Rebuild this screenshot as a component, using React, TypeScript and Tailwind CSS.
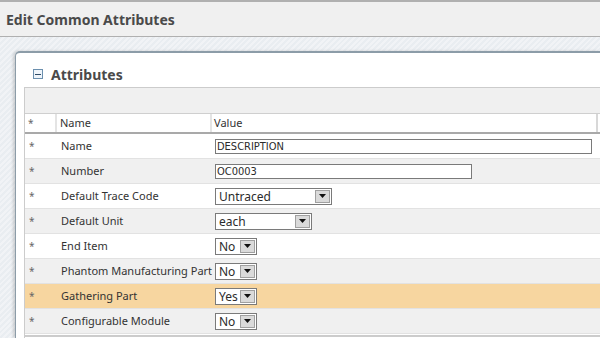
const rows: { label: string; kind: "text" | "select"; value: string; width: number; tone: "white" | "gray" | "hl" }[] = [
  { label: "Name", kind: "text", value: "DESCRIPTION", width: 377, tone: "white" },
  { label: "Number", kind: "text", value: "OC0003", width: 257, tone: "gray" },
  { label: "Default Trace Code", kind: "select", value: "Untraced", width: 117, tone: "white" },
  { label: "Default Unit", kind: "select", value: "each", width: 97, tone: "gray" },
  { label: "End Item", kind: "select", value: "No", width: 42, tone: "white" },
  { label: "Phantom Manufacturing Part", kind: "select", value: "No", width: 42, tone: "gray" },
  { label: "Gathering Part", kind: "select", value: "Yes", width: 42, tone: "hl" },
  { label: "Configurable Module", kind: "select", value: "No", width: 42, tone: "gray" },
];

const toneClass = {
  white: "bg-white",
  gray: "bg-[#f0f0f0]",
  hl: "bg-[#f7d6a0]",
};

function Select({ value, width }: { value: string; width: number }) {
  return (
    <div
      className="flex h-[17px] items-stretch border border-[#7a7a7a] bg-white"
      style={{ width }}
    >
      <span className="flex-1 pl-[3px] text-[12px] leading-[15px] text-[#2b2b2b] [font-family:'Noto_Sans',sans-serif]">
        {value}
      </span>
      <span className="m-px flex w-[15px] items-center justify-center border border-[#a0a0a0] bg-[#dadada]">
        <svg width="7" height="4" viewBox="0 0 7 4">
          <path d="M0 0h7L3.5 4z" fill="#111" />
        </svg>
      </span>
    </div>
  );
}

export default function App() {
  return (
    <div className="flex h-[338px] w-[600px] flex-col overflow-hidden bg-[#f0f0f0] [font-family:'Noto_Sans',sans-serif]">
      <div className="flex h-[37px] shrink-0 items-center border-t-2 border-b border-[#b0b0b0] pl-[6px]">
        <span className="text-[14px] font-bold text-[#4a4a4a]">Edit Common Attributes</span>
      </div>
      <div className="flex flex-1 flex-col bg-[repeating-linear-gradient(135deg,#e9edf1_0px,#e9edf1_2px,#f1f3f6_2px,#f1f3f6_4px)] pl-[15px] pt-[14px]">
        <div className="flex flex-1 flex-col rounded-tl-[5px] border-t-2 border-l border-[#8c9ca8] bg-white shadow-[-2px_0_3px_rgba(0,0,0,0.15)]">
          <div className="flex h-[34px] items-center gap-[8px] pl-[17px] pt-[8px]">
            <span className="flex h-[10px] w-[10px] items-center justify-center border border-[#6b8fae] bg-[#eef4fa]">
              <span className="h-px w-[6px] bg-[#2d4a66]" />
            </span>
            <span className="text-[14px] font-bold text-[#4a4a4a]">Attributes</span>
          </div>
          <div className="ml-[8px] flex flex-1 flex-col border-l border-[#cccccc]">
            <div className="h-[26px] border-t border-[#cccccc] bg-[#f0f0f0]" />
            <div className="flex h-[21px] border-t border-b-2 border-[#cfcfcf] border-b-[#a9a9a9] bg-white text-[11px] text-[#333]">
              <div className="flex w-[32px] items-center border-r-2 border-[#e4e4e4] pl-[3px] text-[10px] text-[#666]">*</div>
              <div className="flex w-[155px] items-center border-r-2 border-[#e4e4e4] pl-[3px]">Name</div>
              <div className="flex w-[386px] items-center border-r-2 border-[#d8d8d8] pl-[2px]">Value</div>
              <div className="flex-1" />
            </div>
            {rows.map((r) => (
              <div
                key={r.label}
                className={`flex h-[25px] shrink-0 items-center border-b border-[#e2e2e2] text-[11px] text-[#333] ${toneClass[r.tone]}`}
              >
                <div className="w-[32px] pl-[4px] text-[10px] text-[#666]">*</div>
                <div className="w-[155px] pl-[4px] whitespace-nowrap">{r.label}</div>
                <div className="flex-1 pl-[3px]">
                  {r.kind === "text" ? (
                    <div
                      className="h-[15px] border border-[#7a7a7a] bg-white pl-px text-[11px] leading-[13px] text-[#2b2b2b] [font-family:'DejaVu_Sans_Condensed','DejaVu_Sans',sans-serif]"
                      style={{ width: r.width }}
                    >
                      {r.value}
                    </div>
                  ) : (
                    <Select value={r.value} width={r.width} />
                  )}
                </div>
              </div>
            ))}
            <div className="mt-px h-[2px] bg-[#cccccc]" />
            <div className="flex-1 bg-white" />
          </div>
        </div>
      </div>
    </div>
  );
}
